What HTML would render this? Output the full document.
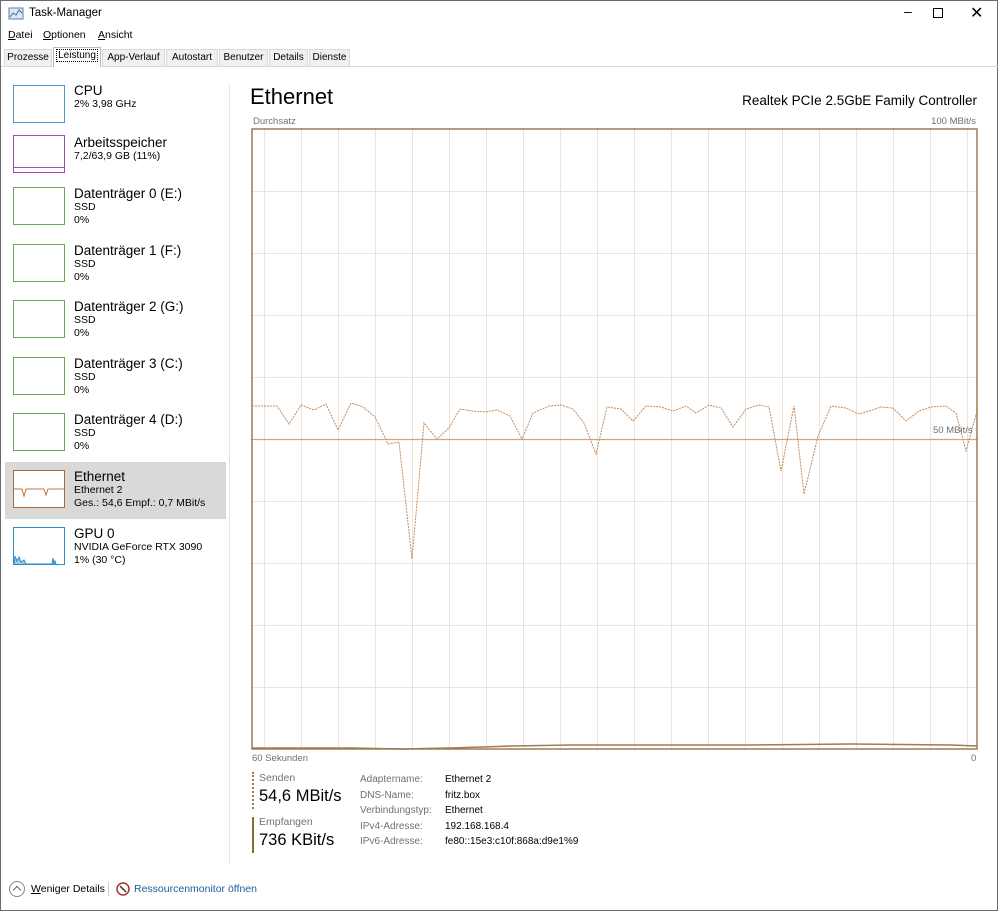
<!DOCTYPE html>
<html><head><meta charset="utf-8"><style>
*{margin:0;padding:0;box-sizing:border-box}
body{width:998px;height:911px;background:#fff;font-family:"Liberation Sans",sans-serif;font-size:12px;color:#000;position:relative;overflow:hidden;border:1px solid #6b6b6b}
.a{position:absolute;white-space:nowrap}
.tab{position:absolute;top:48px;height:17px;font-size:10px;padding:2px 0 0 0;text-align:center;background:#f0f0f0;border:1px solid #d9d9d9;border-bottom:none;white-space:nowrap;overflow:hidden}
.item .t{font-size:13.5px}
.item .s{font-size:10.5px;line-height:13px}
.thumb{position:absolute;left:12px;width:52px;height:38px;border:1px solid}
.lbl{color:#707070;font-size:10.5px}
</style></head><body>
<svg class="a" style="left:7px;top:6px" width="16" height="14"><rect x="1" y="1" width="14" height="11" fill="#dde8f4" stroke="#5a7fa8"/><polyline points="2,10 5,6 8,8 11,3 14,6" fill="none" stroke="#3a6ea5"/></svg>
<div class="a" style="left:28px;top:6px;font-size:11.5px">Task-Manager</div>
<div class="a" style="left:903px;top:2px;font-size:14px">&#8211;</div>
<div class="a" style="left:932px;top:7px;width:10px;height:10px;border:1px solid #000"></div>
<div class="a" style="left:969px;top:2px;font-size:16px">&#10005;</div>
<div class="a" style="left:7px;top:28px;font-size:10.5px"><u>D</u>atei</div>
<div class="a" style="left:42px;top:28px;font-size:10.5px"><u>O</u>ptionen</div>
<div class="a" style="left:97px;top:28px;font-size:10.5px"><u>A</u>nsicht</div>
<div class="a" style="left:0;top:65px;width:998px;height:1px;background:#d9d9d9"></div>
<div class="tab" style="left:3px;width:48px">Prozesse</div>
<div class="tab" style="left:52px;top:46px;height:20px;width:48px;background:#fff;border-color:#bbb"><span style="border:1px dotted #000;padding:0 1px">Leistung</span></div>
<div class="tab" style="left:101px;width:63px">App-Verlauf</div>
<div class="tab" style="left:165px;width:52px">Autostart</div>
<div class="tab" style="left:218px;width:49px">Benutzer</div>
<div class="tab" style="left:268px;width:39px">Details</div>
<div class="tab" style="left:308px;width:41px">Dienste</div>

<div class="a" style="left:228px;top:84px;width:1px;height:780px;background:#e5e5e5"></div>

<div class="thumb" style="top:84px;border-color:#4a9bc7"></div>
<div class="a item" style="left:73px;top:82px"><div class="t">CPU</div><div class="s">2% 3,98 GHz</div></div>
<div class="thumb" style="top:134px;border-color:#9c4fb0"><div style="position:absolute;bottom:4px;left:0;right:0;height:1px;background:#9c4fb0"></div></div>
<div class="a item" style="left:73px;top:134px"><div class="t">Arbeitsspeicher</div><div class="s">7,2/63,9 GB (11%)</div></div>
<div class="thumb" style="top:186px;border-color:#6aa84f"></div>
<div class="a item" style="left:73px;top:185px"><div class="t">Datenträger 0 (E:)</div><div class="s">SSD<br>0%</div></div>
<div class="thumb" style="top:243px;border-color:#6aa84f"></div>
<div class="a item" style="left:73px;top:242px"><div class="t">Datenträger 1 (F:)</div><div class="s">SSD<br>0%</div></div>
<div class="thumb" style="top:299px;border-color:#6aa84f"></div>
<div class="a item" style="left:73px;top:298px"><div class="t">Datenträger 2 (G:)</div><div class="s">SSD<br>0%</div></div>
<div class="thumb" style="top:356px;border-color:#6aa84f"></div>
<div class="a item" style="left:73px;top:355px"><div class="t">Datenträger 3 (C:)</div><div class="s">SSD<br>0%</div></div>
<div class="thumb" style="top:412px;border-color:#6aa84f"></div>
<div class="a item" style="left:73px;top:411px"><div class="t">Datenträger 4 (D:)</div><div class="s">SSD<br>0%</div></div>
<div class="a" style="left:4px;top:461px;width:221px;height:57px;background:#d9d9d9"></div>
<div class="thumb" style="top:469px;border-color:#a86b3c;background:#fff"><svg width="50" height="36"><polyline points="0,18 8,18 10,25 12,18 30,18 32,24 34,18 50,18" fill="none" stroke="#b87a4a"/></svg></div>
<div class="a item" style="left:73px;top:468px"><div class="t">Ethernet</div><div class="s">Ethernet 2<br>Ges.: 54,6 Empf.: 0,7 MBit/s</div></div>
<div class="thumb" style="top:526px;border-color:#2b8ec7"><svg width="50" height="36"><polyline points="0,36 1,28 3,33 5,29 7,34 10,32 12,36 38,36 39,30 40,36 41,33 42,36" fill="#9cc9e6" stroke="#2b8ec7"/></svg></div>
<div class="a item" style="left:73px;top:525px"><div class="t">GPU 0</div><div class="s">NVIDIA GeForce RTX 3090<br>1% (30 °C)</div></div>

<div class="a" style="left:249px;top:83px;font-size:22px">Ethernet</div>
<div class="a" style="right:20px;top:92px;font-size:13.5px">Realtek PCIe 2.5GbE Family Controller</div>
<div class="a lbl" style="left:252px;top:115px;font-size:9.5px">Durchsatz</div>
<div class="a lbl" style="right:21px;top:115px;font-size:9.5px">100 MBit/s</div>
<svg class="a" style="left:250px;top:127px" width="728" height="623">
<g stroke="#ece4dc" stroke-width="1">
<path d="M13.5 0V622M50.5 0V622M87.5 0V622M124.5 0V622M161.5 0V622M198.5 0V622M235.5 0V622M272.5 0V622M309.5 0V622M346.5 0V622M383.5 0V622M420.5 0V622M457.5 0V622M494.5 0V622M531.5 0V622M568.5 0V622M605.5 0V622M642.5 0V622M679.5 0V622M716.5 0V622"/>
<path d="M0 63.5H727M0 125.5H727M0 187.5H727M0 249.5H727M0 373.5H727M0 435.5H727M0 497.5H727M0 559.5H727"/>
</g>
<path d="M0 311.5H727" stroke="#c9a88a" stroke-width="1.3"/>
<rect x="1" y="1" width="725" height="620" fill="none" stroke="#a07a52" stroke-width="1.5"/>
<polyline fill="none" stroke="#c48a5c" stroke-width="1" stroke-dasharray="2,1" points="1,278 26,278 38,296 50,277 63,282 75,276 87,302 100,275 112,279 124,289 137,316 148,314 161,431 173,295 186,311 198,300 209,281 222,283 235,284 246,282 259,288 271,311 282,285 298,278 310,277 322,281 333,295 345,326 356,279 370,281 382,293 395,278 410,279 422,283 435,278 445,285 458,277 470,280 482,299 495,281 508,277 518,279 530,343 543,278 553,366 567,308 580,278 595,280 608,286 618,283 630,279 642,280 655,293 668,283 680,279 695,278 705,285 715,323 726,283"/>
<polyline fill="none" stroke="#a07a52" stroke-width="1.5" points="1,620 100,620 150,621 200,620 260,618 320,617 400,617 500,617 600,616 700,617 726,618"/>
</svg>
<div class="a lbl" style="left:932px;top:424px;font-size:9.5px">50 MBit/s</div>
<div class="a lbl" style="left:251px;top:752px;font-size:9.5px">60 Sekunden</div>
<div class="a lbl" style="left:970px;top:752px;font-size:9.5px">0</div>

<div class="a" style="left:251px;top:771px;width:0;height:37px;border-left:2px dotted #a07a52"></div>
<div class="a lbl" style="left:258px;top:771px">Senden</div>
<div class="a" style="left:258px;top:786px;font-size:16.5px">54,6 MBit/s</div>
<div class="a" style="left:251px;top:816px;width:2px;height:36px;background:#8a6a3a"></div>
<div class="a lbl" style="left:258px;top:815px">Empfangen</div>
<div class="a" style="left:258px;top:830px;font-size:16.5px">736 KBit/s</div>
<div class="a lbl" style="left:359px;top:771px;line-height:15.5px;font-size:10px">Adaptername:<br>DNS-Name:<br>Verbindungstyp:<br>IPv4-Adresse:<br>IPv6-Adresse:</div>
<div class="a" style="left:444px;top:771px;font-size:10px;line-height:15.5px">Ethernet 2<br>fritz.box<br>Ethernet<br>192.168.168.4<br>fe80::15e3:c10f:868a:d9e1%9</div>

<div class="a" style="left:8px;top:880px;width:16px;height:16px;border:1px solid #888;border-radius:50%"></div>
<div class="a" style="left:13px;top:886px;width:6px;height:6px;border-left:1px solid #666;border-top:1px solid #666;transform:rotate(45deg)"></div>
<div class="a" style="left:30px;top:882px;font-size:10.5px"><u>W</u>eniger Details</div>
<div class="a" style="left:107px;top:881px;width:1px;height:14px;background:#ccc"></div>
<svg class="a" style="left:115px;top:881px" width="14" height="14"><circle cx="7" cy="7" r="6" fill="#fff" stroke="#a33" stroke-width="1.5"/><path d="M4 4L10 10" stroke="#333" stroke-width="1.5"/></svg>
<div class="a" style="left:133px;top:882px;font-size:10.5px;color:#1a5e9a">Ressourcenmonitor öffnen</div>
</body></html>
